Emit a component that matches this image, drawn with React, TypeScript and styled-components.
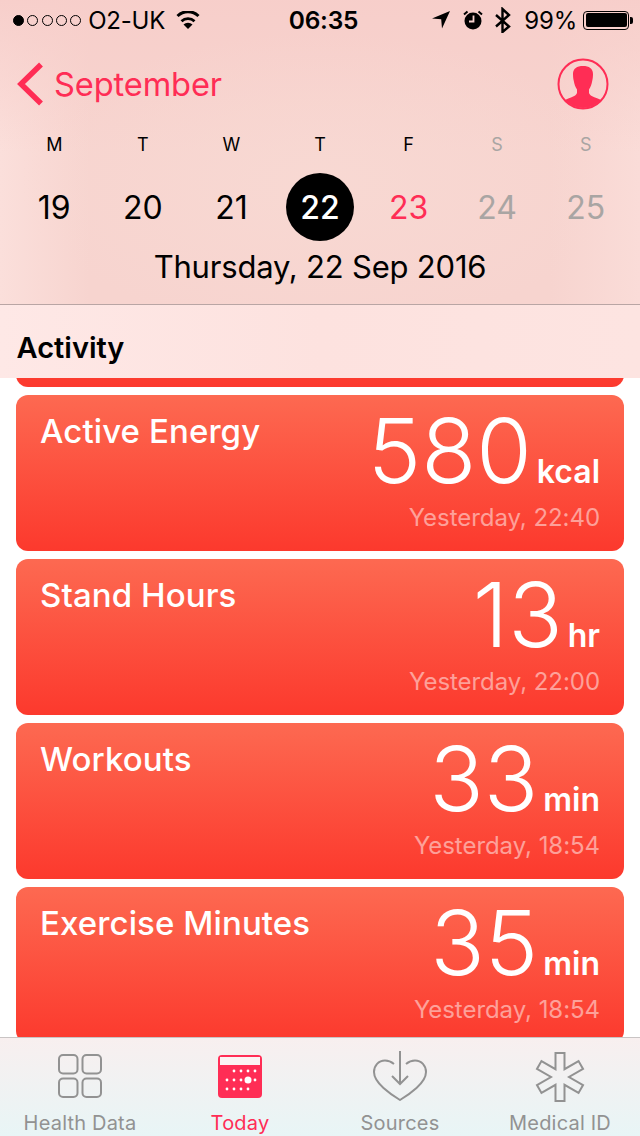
import React from "react";
import styled, { createGlobalStyle } from "styled-components";

const pink = "#ff2d55";
const tabGray = "#929292";

const GlobalStyle = createGlobalStyle`
  html, body {
    margin: 0;
    padding: 0;
    background: #fff;
  }
  * {
    box-sizing: border-box;
  }
`;

const Page = styled.div`
  width: 640px;
  height: 1136px;
  overflow: hidden;
  display: flex;
  flex-direction: column;
  font-family: Inter, "Liberation Sans", sans-serif;
  color: #000;
  background: #fff;
`;

/* top area */
const Header = styled.header`
  height: 305px;
  flex: none;
  border-bottom: 1px solid #b9a5a4;
  background:
    radial-gradient(ellipse 300px 150px at 50% 60%, rgba(248, 217, 211, 0.9), rgba(248, 217, 211, 0) 100%),
    linear-gradient(180deg, rgba(247, 206, 202, 0.95) 0%, rgba(247, 206, 202, 0) 50%),
    linear-gradient(90deg, #fbdfdb 0%, #f7d4cf 14%, #f7d4cf 86%, #fadcd8 100%);
`;

const StatusBar = styled.div`
  height: 40px;
  padding: 0 11px 0 13px;
  display: grid;
  grid-template-columns: 1fr auto 1fr;
  align-items: center;
  font-size: 24px;
  letter-spacing: -0.2px;
`;

const StatusLeft = styled.div`
  display: flex;
  align-items: center;
`;

const StatusRight = styled.div`
  display: flex;
  align-items: center;
  justify-content: flex-end;
`;

const Clock = styled.div`
  font-weight: 600;
  font-size: 24.5px;
  padding-left: 5px;
`;

const Dots = styled.div`
  display: flex;
  gap: 3.3px;
  margin-right: 7px;
`;

const Dot = styled.span<{ $on?: boolean }>`
  width: 11px;
  height: 11px;
  border-radius: 50%;
  border: 1px solid #000;
  background: ${(p) => (p.$on ? "#000" : "transparent")};
`;

const Carrier = styled.span`
  margin-right: 11px;
`;

const Percent = styled.span`
  margin-left: 13px;
`;

const Battery = styled.div`
  width: 46px;
  height: 19px;
  margin-left: 6px;
  border: 1px solid #000;
  border-radius: 4px;
  padding: 1.5px;
  position: relative;

  &::before {
    content: "";
    display: block;
    height: 100%;
    background: #000;
    border-radius: 2px;
  }

  &::after {
    content: "";
    position: absolute;
    right: -5px;
    top: 5px;
    width: 3px;
    height: 7px;
    background: #000;
    border-radius: 0 2px 2px 0;
  }
`;

const NavRow = styled.div`
  height: 50px;
  margin-top: 19px;
  padding: 0 31px 0 16px;
  display: flex;
  align-items: center;
  justify-content: space-between;
`;

const BackLink = styled.div`
  display: flex;
  align-items: center;
  gap: 10px;
  color: ${pink};
  font-size: 32.6px;
  letter-spacing: -0.1px;
`;

const WeekGrid = styled.div`
  display: grid;
  grid-template-columns: repeat(7, 1fr);
  padding: 0 10px;
`;

const WeekDays = styled(WeekGrid)`
  margin-top: 23px;
  height: 24px;
  align-items: center;
`;

const DayLabel = styled.div<{ $muted?: boolean }>`
  text-align: center;
  font-size: 18px;
  color: ${(p) => (p.$muted ? "#a9a5a3" : "#000")};
`;

const DateRow = styled(WeekGrid)`
  margin-top: 16px;
  height: 70px;
  align-items: center;
`;

const DateCell = styled.div<{ $tone?: "today" | "pink" | "muted" }>`
  justify-self: center;
  width: 68px;
  height: 68px;
  border-radius: 50%;
  display: flex;
  align-items: center;
  justify-content: center;
  font-size: 32px;
  font-weight: ${(p) => (p.$tone === "today" ? 500 : 400)};
  background: ${(p) => (p.$tone === "today" ? "#000" : "transparent")};
  color: ${(p) =>
    p.$tone === "today" ? "#fff" : p.$tone === "pink" ? pink : p.$tone === "muted" ? "#a9a5a3" : "#000"};
`;

const FullDate = styled.div`
  margin-top: 6px;
  text-align: center;
  font-size: 31px;
  letter-spacing: -0.2px;
`;

const SectionTitle = styled.div`
  height: 73px;
  flex: none;
  padding: 12px 17px 0 16.5px;
  display: flex;
  align-items: center;
  font-size: 29px;
  font-weight: 600;
  background: linear-gradient(90deg, #fee8e6, #fde2df 50%, #fde4e1);
  position: relative;
  z-index: 1;
`;

/* scrolled cards */
const CardList = styled.div`
  flex: 1;
  min-height: 0;
  overflow: hidden;
  padding: 0 16px;
  display: flex;
  flex-direction: column;
  gap: 8px;
`;

const Card = styled.div<{ $clipped?: boolean }>`
  flex: none;
  height: 156px;
  margin-top: ${(p) => (p.$clipped ? "-147px" : "0")};
  border-radius: 12px;
  padding: 0 24px;
  display: flex;
  justify-content: space-between;
  color: #fff;
  background: linear-gradient(180deg, #fd6951 0%, #fc392d 100%);
`;

const CardTitle = styled.div`
  margin-top: 14px;
  font-size: 33px;
  font-weight: 500;
  line-height: 44px;
  letter-spacing: 0.1px;
`;

const CardRight = styled.div`
  padding-top: 17px;
  display: flex;
  flex-direction: column;
  align-items: flex-end;
`;

const ValueLine = styled.div`
  display: flex;
  align-items: baseline;
  gap: 5px;
`;

const BigValue = styled.span`
  font-size: 90px;
  font-weight: 300;
  line-height: 78px;
`;

const Unit = styled.span`
  font-size: 32px;
  font-weight: 600;
  line-height: 40px;
`;

const When = styled.div`
  margin-top: 12px;
  font-size: 24px;
  line-height: 28px;
  letter-spacing: -0.05px;
  color: rgba(255, 255, 255, 0.5);
`;

/* bottom tabs */
const TabBar = styled.nav`
  height: 99px;
  flex: none;
  display: grid;
  grid-template-columns: repeat(4, 1fr);
  border-top: 1px solid #c9c4c4;
  background: linear-gradient(180deg, #f8efef 0%, #e8f5f6 100%);
  position: relative;
  z-index: 1;
`;

const Tab = styled.div<{ $active?: boolean }>`
  display: flex;
  flex-direction: column;
  align-items: center;
  color: ${(p) => (p.$active ? pink : tabGray)};
  font-size: 20px;
`;

const TabIcon = styled.div<{ $top: number }>`
  height: 73px;
  padding-top: ${(p) => p.$top}px;
`;

const TabLabel = styled.div`
  line-height: 24px;
  letter-spacing: 0.2px;
`;

const StatusIcon = styled.svg<{ $gap?: number }>`
  display: block;
  flex: none;
  margin-left: ${(p) => p.$gap ?? 0}px;
`;

const WifiIcon = () => (
  <StatusIcon width="24" height="18" viewBox="0 0 24 18">
    <path d="M12 18L7.5 13.5a6.5 6.5 0 0 1 9 0z" />
    <path d="M5.5 10.2a9.5 9.5 0 0 1 13 0" fill="none" stroke="#000" strokeWidth="2.8" />
    <path d="M1.5 5a15 15 0 0 1 21 0" fill="none" stroke="#000" strokeWidth="3" />
  </StatusIcon>
);

const LocationIcon = () => (
  <StatusIcon width="18" height="18" viewBox="0 0 18 18">
    <path d="M18 0L10 17.5 9.2 8.2 0 7.6z" />
  </StatusIcon>
);

const AlarmIcon = () => (
  <StatusIcon $gap={13} width="20" height="20" viewBox="0 0 20 20">
    <circle cx="10" cy="11" r="8.5" />
    <path d="M10.5 5.5v6H6" fill="none" stroke="#f8d3cf" strokeWidth="1.8" />
    <path d="M1 4.5L4.5 1.5M19 4.5L15.5 1.5" fill="none" stroke="#000" strokeWidth="2" />
  </StatusIcon>
);

const BluetoothIcon = () => (
  <StatusIcon $gap={12} width="16" height="26" viewBox="0 0 16 26">
    <path d="M1 8L14 19.5 7.5 25V2L14 8 1 19.5" fill="none" stroke="#000" strokeWidth="2.4" />
  </StatusIcon>
);

const PersonIcon = () => (
  <svg width="52" height="52" viewBox="0 0 52 52">
    <defs>
      <clipPath id="person-clip">
        <circle cx="26" cy="26" r="24" />
      </clipPath>
    </defs>
    <circle cx="26" cy="26" r="24.5" fill="none" stroke={pink} strokeWidth="2" />
    <path
      clipPath="url(#person-clip)"
      fill={pink}
      d="M26 8c6 0 10 2.5 10 8 0 3-.3 5-.8 7-.5 3-1.500 6-3.200 8.500v3c0 2 3 4 6 5 3 1 5 2 7 3v10H7v-10c2-1 4-2 7-3 3-1 6-3 6-5v-3c-1.700-2.500-2.700-5.500-3.200-8.500-.5-2-.8-4-.8-7 0-5.500 4-8 10-8z"
    />
  </svg>
);

const GridIcon = () => (
  <svg width="44" height="44" viewBox="0 0 44 44" fill="none" stroke={tabGray} strokeWidth="2">
    <rect x="1" y="1" width="18.5" height="18.5" rx="4" />
    <rect x="24.5" y="1" width="18.5" height="18.5" rx="4" />
    <rect x="1" y="24.5" width="18.5" height="18.5" rx="4" />
    <rect x="24.5" y="24.5" width="18.5" height="18.5" rx="4" />
  </svg>
);

const calendarDots = [
  [16, 16], [23, 16], [30, 16], [37, 16],
  [9, 25], [16, 25], [23, 25], [37, 25],
  [9, 34], [16, 34], [23, 34], [30, 34],
];

const CalendarIcon = () => (
  <svg width="44" height="43" viewBox="0 0 44 43">
    <rect x="0" y="0" width="44" height="43" rx="4" fill={pink} />
    <rect x="2" y="2" width="40" height="8" fill="#fbf3f3" />
    {calendarDots.map(([x, y]) => (
      <circle key={`${x}-${y}`} cx={x} cy={y} r="1.4" fill="#fff" />
    ))}
    <circle cx="30" cy="25" r="3.5" fill="#fff" />
  </svg>
);

const HeartIcon = () => (
  <svg width="54" height="50" viewBox="0 0 54 50" fill="none" stroke={tabGray} strokeWidth="2">
    <path d="M21 13C18 10.500 15 9.500 12 9.500 5.500 9.500 1 14.500 1 21c0 6 4 11 9.500 16C16 42 22 46 27 49c5-3 11-7 16.500-12C49 32 53 27 53 21c0-6.500-4.500-11.500-11-11.500-3 0-6 1-9 3.500" />
    <path d="M27 0v33M19 25l8 8 8-8" />
  </svg>
);

// six arm outline, worked out from arm length and half width
const asteriskPoints = () => {
  const points: string[] = [];
  const [cx, cy, len, half, inner] = [25, 25, 24, 4.5, 9];
  for (let i = 0; i < 6; i += 1) {
    const a = (i * Math.PI) / 3 - Math.PI / 2;
    const [dx, dy] = [Math.cos(a), Math.sin(a)];
    points.push(`${cx + len * dx + half * dy},${cy + len * dy - half * dx}`);
    points.push(`${cx + len * dx - half * dy},${cy + len * dy + half * dx}`);
    const b = a + Math.PI / 6;
    points.push(`${cx + inner * Math.cos(b)},${cy + inner * Math.sin(b)}`);
  }
  return points.join(" ");
};

const MedicalIcon = () => (
  <svg width="50" height="50" viewBox="0 0 50 50">
    <polygon points={asteriskPoints()} fill="none" stroke={tabGray} strokeWidth="2" />
  </svg>
);

const week = [
  { label: "M", date: 19 },
  { label: "T", date: 20 },
  { label: "W", date: 21 },
  { label: "T", date: 22, tone: "today" as const },
  { label: "F", date: 23, tone: "pink" as const },
  { label: "S", date: 24, tone: "muted" as const },
  { label: "S", date: 25, tone: "muted" as const },
];

const cards = [
  { title: "Active Energy", value: "580", unit: "kcal", when: "Yesterday, 22:40" },
  { title: "Stand Hours", value: "13", unit: "hr", when: "Yesterday, 22:00" },
  { title: "Workouts", value: "33", unit: "min", when: "Yesterday, 18:54" },
  { title: "Exercise Minutes", value: "35", unit: "min", when: "Yesterday, 18:54" },
];

const App: React.FC = () => (
  <Page>
    <GlobalStyle />
    <Header>
      <StatusBar>
        <StatusLeft>
          <Dots>
            <Dot $on />
            <Dot />
            <Dot />
            <Dot />
            <Dot />
          </Dots>
          <Carrier>O2-UK</Carrier>
          <WifiIcon />
        </StatusLeft>
        <Clock>06:35</Clock>
        <StatusRight>
          <LocationIcon />
          <AlarmIcon />
          <BluetoothIcon />
          <Percent>99%</Percent>
          <Battery />
        </StatusRight>
      </StatusBar>

      <NavRow>
        <BackLink>
          <svg width="28" height="44" viewBox="0 0 28 44">
            <path d="M25 2.5L5 22l20 19.5" fill="none" stroke={pink} strokeWidth="5.5" />
          </svg>
          September
        </BackLink>
        <PersonIcon />
      </NavRow>

      <WeekDays>
        {week.map((day, index) => (
          <DayLabel key={index} $muted={day.tone === "muted"}>
            {day.label}
          </DayLabel>
        ))}
      </WeekDays>
      <DateRow>
        {week.map((day) => (
          <DateCell key={day.date} $tone={day.tone}>
            {day.date}
          </DateCell>
        ))}
      </DateRow>
      <FullDate>Thursday, 22 Sep 2016</FullDate>
    </Header>

    <SectionTitle>Activity</SectionTitle>

    <CardList>
      <Card $clipped />
      {cards.map((card) => (
        <Card key={card.title}>
          <CardTitle>{card.title}</CardTitle>
          <CardRight>
            <ValueLine>
              <BigValue>{card.value}</BigValue>
              <Unit>{card.unit}</Unit>
            </ValueLine>
            <When>{card.when}</When>
          </CardRight>
        </Card>
      ))}
    </CardList>

    <TabBar>
      <Tab>
        <TabIcon $top={16}>
          <GridIcon />
        </TabIcon>
        <TabLabel>Health Data</TabLabel>
      </Tab>
      <Tab $active>
        <TabIcon $top={17}>
          <CalendarIcon />
        </TabIcon>
        <TabLabel>Today</TabLabel>
      </Tab>
      <Tab>
        <TabIcon $top={13}>
          <HeartIcon />
        </TabIcon>
        <TabLabel>Sources</TabLabel>
      </Tab>
      <Tab>
        <TabIcon $top={14}>
          <MedicalIcon />
        </TabIcon>
        <TabLabel>Medical ID</TabLabel>
      </Tab>
    </TabBar>
  </Page>
);

export default App;
